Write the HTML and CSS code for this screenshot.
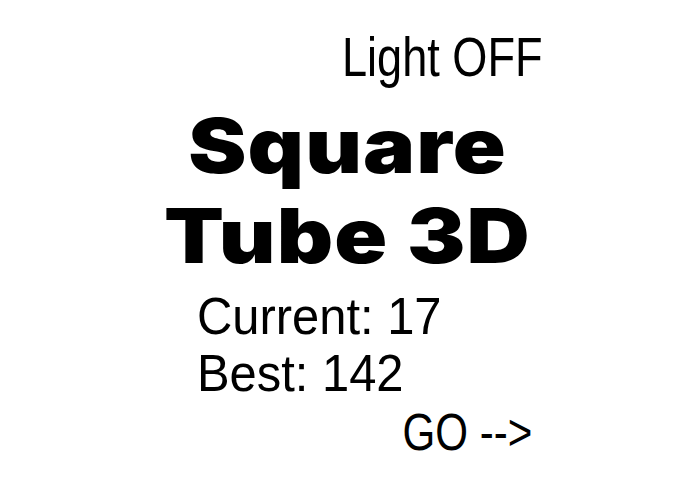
FILE: index.html
```html
<!DOCTYPE html>
<html>
<head>
<meta charset="utf-8">
<link rel="stylesheet" href="styles.css">
</head>
<body>
<main class="screen">
  <div class="light"><span class="squeeze-right light-text">Light OFF</span></div>
  <h1 class="title"><span class="wide">Square</span><br><span class="wide">Tube 3D</span></h1>
  <div class="stats">
    <div class="stat"><span class="squeeze-left">Current: 17</span></div>
    <div class="stat"><span class="squeeze-left">Best: 142</span></div>
  </div>
  <div class="go"><span class="squeeze-right go-text">GO --&gt;</span></div>
</main>
</body>
</html>
```
FILE: styles.css
```css
html, body {
  margin: 0;
  padding: 0;
  background: #ffffff;
}
.screen {
  width: 695px;
  height: 494px;
  box-sizing: border-box;
  padding-top: 29px;
  display: flex;
  flex-direction: column;
  color: #000;
  font-family: "Liberation Sans", Arial, sans-serif;
}
.light {
  font-size: 55px;
  line-height: 57px;
  text-align: right;
  padding-right: 152px;
}
.squeeze-right {
  display: inline-block;
  transform-origin: right center;
}
.squeeze-left {
  display: inline-block;
  transform-origin: left center;
  transform: scaleX(0.94);
}
.light-text {
  transform: scaleX(0.82);
}
.go-text {
  transform: scaleX(0.81);
}
.title {
  margin: 14px 0 0 0;
  font-family: Inter, "Liberation Sans", sans-serif;
  font-weight: 900;
  font-size: 76px;
  line-height: 90px;
  text-align: center;
  letter-spacing: 1px;
}
.wide {
  display: inline-block;
  transform: scaleX(1.15);
  transform-origin: center;
}
.stats {
  margin-top: 8px;
  padding-left: 197px;
}
.stat {
  font-size: 52px;
  line-height: 57px;
}
.go {
  margin-top: 2px;
  font-size: 52px;
  line-height: 57px;
  text-align: right;
  padding-right: 163px;
}
```
